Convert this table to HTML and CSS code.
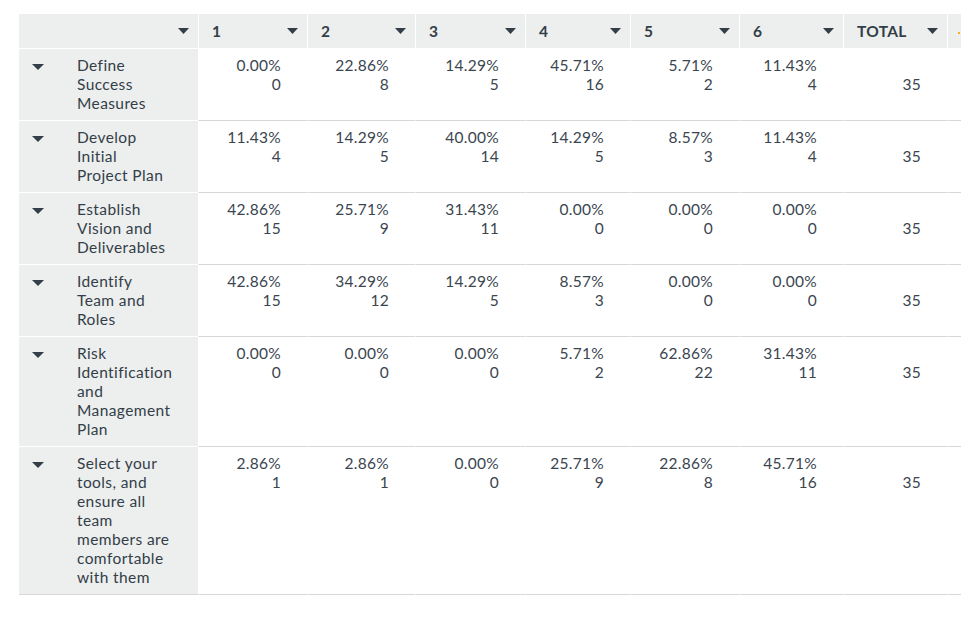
FILE: index.html
```html
<!DOCTYPE html>
<html lang="en">
<head>
<meta charset="utf-8">
<title>Matrix results</title>
<link rel="stylesheet" href="styles.css">
</head>
<body>
<div class="viewport">
  <div class="matrix">
    <div class="row head">
      <div class="hcell first"><span class="htext"></span><svg class="caret" viewBox="0 0 11 6"><path d="M0 0h11L5.5 6z"/></svg></div>
      <div class="hcell"><span class="htext">1</span><svg class="caret" viewBox="0 0 11 6"><path d="M0 0h11L5.5 6z"/></svg></div>
      <div class="hcell"><span class="htext">2</span><svg class="caret" viewBox="0 0 11 6"><path d="M0 0h11L5.5 6z"/></svg></div>
      <div class="hcell"><span class="htext">3</span><svg class="caret" viewBox="0 0 11 6"><path d="M0 0h11L5.5 6z"/></svg></div>
      <div class="hcell"><span class="htext">4</span><svg class="caret" viewBox="0 0 11 6"><path d="M0 0h11L5.5 6z"/></svg></div>
      <div class="hcell"><span class="htext">5</span><svg class="caret" viewBox="0 0 11 6"><path d="M0 0h11L5.5 6z"/></svg></div>
      <div class="hcell"><span class="htext">6</span><svg class="caret" viewBox="0 0 11 6"><path d="M0 0h11L5.5 6z"/></svg></div>
      <div class="hcell"><span class="htext">TOTAL</span><svg class="caret" viewBox="0 0 11 6"><path d="M0 0h11L5.5 6z"/></svg></div>
      <div class="hcell extra"><span class="star"></span></div>
    </div>

    <div class="row">
      <div class="label"><svg class="rcaret" viewBox="0 0 12 6"><path d="M0 0h12L6 6z"/></svg><span class="ltext">Define<br>Success<br>Measures</span></div>
      <div class="cell"><span class="pct">0.00%</span><span class="cnt">0</span></div>
      <div class="cell"><span class="pct">22.86%</span><span class="cnt">8</span></div>
      <div class="cell"><span class="pct">14.29%</span><span class="cnt">5</span></div>
      <div class="cell"><span class="pct">45.71%</span><span class="cnt">16</span></div>
      <div class="cell"><span class="pct">5.71%</span><span class="cnt">2</span></div>
      <div class="cell"><span class="pct">11.43%</span><span class="cnt">4</span></div>
      <div class="cell total">35</div>
      <div class="cell blank"></div>
    </div>

    <div class="row">
      <div class="label"><svg class="rcaret" viewBox="0 0 12 6"><path d="M0 0h12L6 6z"/></svg><span class="ltext">Develop<br>Initial<br>Project Plan</span></div>
      <div class="cell"><span class="pct">11.43%</span><span class="cnt">4</span></div>
      <div class="cell"><span class="pct">14.29%</span><span class="cnt">5</span></div>
      <div class="cell"><span class="pct">40.00%</span><span class="cnt">14</span></div>
      <div class="cell"><span class="pct">14.29%</span><span class="cnt">5</span></div>
      <div class="cell"><span class="pct">8.57%</span><span class="cnt">3</span></div>
      <div class="cell"><span class="pct">11.43%</span><span class="cnt">4</span></div>
      <div class="cell total">35</div>
      <div class="cell blank"></div>
    </div>

    <div class="row">
      <div class="label"><svg class="rcaret" viewBox="0 0 12 6"><path d="M0 0h12L6 6z"/></svg><span class="ltext">Establish<br>Vision and<br>Deliverables</span></div>
      <div class="cell"><span class="pct">42.86%</span><span class="cnt">15</span></div>
      <div class="cell"><span class="pct">25.71%</span><span class="cnt">9</span></div>
      <div class="cell"><span class="pct">31.43%</span><span class="cnt">11</span></div>
      <div class="cell"><span class="pct">0.00%</span><span class="cnt">0</span></div>
      <div class="cell"><span class="pct">0.00%</span><span class="cnt">0</span></div>
      <div class="cell"><span class="pct">0.00%</span><span class="cnt">0</span></div>
      <div class="cell total">35</div>
      <div class="cell blank"></div>
    </div>

    <div class="row">
      <div class="label"><svg class="rcaret" viewBox="0 0 12 6"><path d="M0 0h12L6 6z"/></svg><span class="ltext">Identify<br>Team and<br>Roles</span></div>
      <div class="cell"><span class="pct">42.86%</span><span class="cnt">15</span></div>
      <div class="cell"><span class="pct">34.29%</span><span class="cnt">12</span></div>
      <div class="cell"><span class="pct">14.29%</span><span class="cnt">5</span></div>
      <div class="cell"><span class="pct">8.57%</span><span class="cnt">3</span></div>
      <div class="cell"><span class="pct">0.00%</span><span class="cnt">0</span></div>
      <div class="cell"><span class="pct">0.00%</span><span class="cnt">0</span></div>
      <div class="cell total">35</div>
      <div class="cell blank"></div>
    </div>

    <div class="row">
      <div class="label"><svg class="rcaret" viewBox="0 0 12 6"><path d="M0 0h12L6 6z"/></svg><span class="ltext">Risk<br>Identification<br>and<br>Management<br>Plan</span></div>
      <div class="cell"><span class="pct">0.00%</span><span class="cnt">0</span></div>
      <div class="cell"><span class="pct">0.00%</span><span class="cnt">0</span></div>
      <div class="cell"><span class="pct">0.00%</span><span class="cnt">0</span></div>
      <div class="cell"><span class="pct">5.71%</span><span class="cnt">2</span></div>
      <div class="cell"><span class="pct">62.86%</span><span class="cnt">22</span></div>
      <div class="cell"><span class="pct">31.43%</span><span class="cnt">11</span></div>
      <div class="cell total">35</div>
      <div class="cell blank"></div>
    </div>

    <div class="row last">
      <div class="label"><svg class="rcaret" viewBox="0 0 12 6"><path d="M0 0h12L6 6z"/></svg><span class="ltext">Select your<br>tools, and<br>ensure all<br>team<br>members are<br>comfortable<br>with them</span></div>
      <div class="cell"><span class="pct">2.86%</span><span class="cnt">1</span></div>
      <div class="cell"><span class="pct">2.86%</span><span class="cnt">1</span></div>
      <div class="cell"><span class="pct">0.00%</span><span class="cnt">0</span></div>
      <div class="cell"><span class="pct">25.71%</span><span class="cnt">9</span></div>
      <div class="cell"><span class="pct">22.86%</span><span class="cnt">8</span></div>
      <div class="cell"><span class="pct">45.71%</span><span class="cnt">16</span></div>
      <div class="cell total">35</div>
      <div class="cell blank"></div>
    </div>
  </div>
</div>
</body>
</html>
```

FILE: styles.css
```css
html, body {
  margin: 0;
  padding: 0;
  background: #ffffff;
  overflow: hidden;
}

.viewport {
  width: 961px;
  height: 637px;
  overflow: hidden;
  padding: 14px 0 0 19px;
  box-sizing: border-box;
}

.matrix {
  display: flex;
  flex-direction: column;
  width: 960px;
  font-family: Lato, "Liberation Sans", sans-serif;
  color: #333e48;
}

.row {
  display: grid;
  grid-template-columns: 179px 109px 108px 110px 105px 109px 104px 104px 40px;
}

/* header */
.head {
  height: 35px;
}

.hcell {
  background: #edeeee;
  border-left: 1px solid #ffffff;
  border-bottom: 1px solid #ffffff;
  display: flex;
  align-items: center;
  justify-content: space-between;
  padding: 0 9px 0 13px;
  font-size: 15.5px;
  font-weight: 700;
  letter-spacing: 0.3px;
}

.hcell.first {
  border-left: none;
}

.hcell.extra {
  justify-content: flex-start;
  padding-left: 10px;
}

.star {
  width: 2px;
  height: 2px;
  background: #f2b21c;
  margin-top: 4px;
}

.caret {
  width: 11px;
  height: 6px;
  fill: #333e48;
  flex: none;
}

/* body rows */
.label {
  background: #edeeee;
  border-bottom: 1px solid #ffffff;
  display: flex;
  align-items: flex-start;
  padding: 7px 0 7px 13px;
}

.rcaret {
  width: 12px;
  height: 6px;
  fill: #333e48;
  flex: none;
  margin-top: 8px;
}

.ltext {
  margin-left: 33px;
  white-space: nowrap;
  font-size: 15.5px;
  letter-spacing: 0.4px;
  line-height: 19px;
  color: #333e48;
}

.cell {
  border-bottom: 1px solid #d6d7d7;
  border-left: 1px solid transparent;
  display: flex;
  flex-direction: column;
  align-items: flex-end;
  padding: 7px 26px 7px 0;
  font-size: 15.5px;
  letter-spacing: 0.3px;
  line-height: 19px;
  color: #3a454f;
}

.cell.total {
  padding-top: 26px;
}

.row.last .label {
  border-bottom: 1px solid #d6d7d7;
}
```
